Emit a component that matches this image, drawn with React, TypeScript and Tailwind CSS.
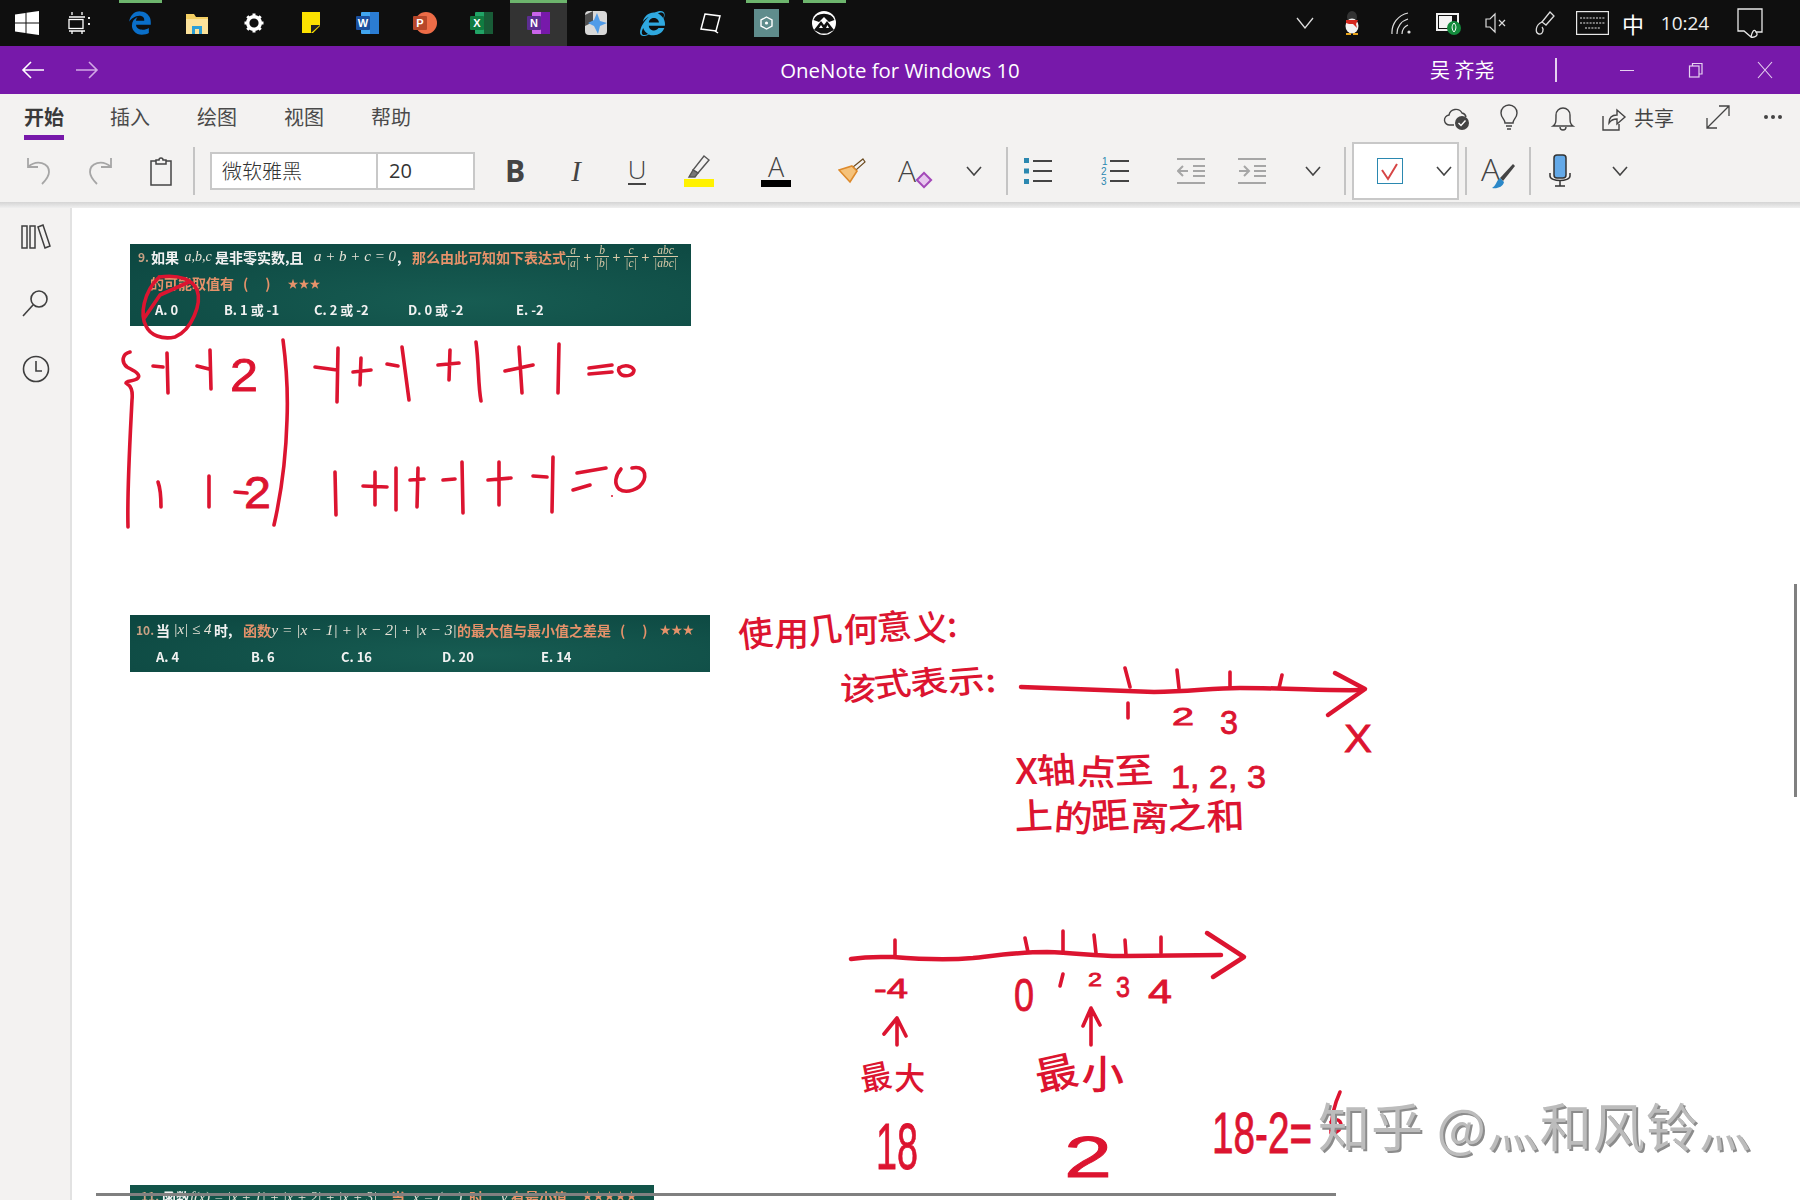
import { FaEdgeLegacy, FaInternetExplorer } from "react-icons/fa6";

const INK = "#dc1430";
const CJK = "'Noto Sans CJK SC', sans-serif";
const NUM = "'Liberation Sans', sans-serif";

const TaskSlot = ({ children, active, running }: { children: React.ReactNode; active?: boolean; running?: boolean }) => (
    <div className={`relative w-[57px] h-[46px] flex items-center justify-center ${active ? "bg-[#333333]" : ""}`}>
        {running && <div className={`absolute top-0 h-[3px] bg-[#6db56d] ${active ? "left-0 right-0" : "left-[8px] right-[6px]"}`} />}
        {children}
    </div>
);

const OfficeIcon = ({ letter, dark, mid, light, round }: { letter: string; dark: string; mid: string; light: string; round?: boolean }) => (
    <svg width="26" height="26" viewBox="0 0 26 26">
        {round ? (
            <circle cx="14" cy="13" r="11" fill={light} />
        ) : (
            <>
                <rect x="6" y="2" width="18" height="22" rx="1" fill={light} />
                <rect x="15" y="2" width="9" height="22" fill={mid} />
            </>
        )}
        <rect x="1" y="6" width="14" height="14" rx="1" fill={dark} />
        <text x="8" y="17" textAnchor="middle" fontSize="11" fontWeight="700" fill="white" fontFamily={NUM}>{letter}</text>
    </svg>
);

const Taskbar = () => (
    <div className="relative h-[46px] bg-[#0f0f0f] flex items-center shrink-0 text-white">
        <div className="w-[54px] flex justify-center">
            <svg width="26" height="26" viewBox="0 0 26 26" fill="white">
                <polygon points="1,4.5 11.5,3 11.5,12.5 1,12.5" />
                <polygon points="12.5,2.8 25,1 25,12.5 12.5,12.5" />
                <polygon points="1,13.5 11.5,13.5 11.5,23 1,21.5" />
                <polygon points="12.5,13.5 25,13.5 25,25 12.5,23.2" />
            </svg>
        </div>
        <div className="w-[52px] flex justify-center">
            <svg width="26" height="24" viewBox="0 0 26 24" fill="none" stroke="white" strokeWidth="1.3">
                <path d="M2 6H18M15 1V4M5 1V4" />
                <rect x="2" y="8.5" width="14" height="9" />
                <path d="M2 20H18M5 20V23M15 20V23" />
                <path d="M22 6V8M22 12V14" strokeWidth="1.8" />
            </svg>
        </div>
        <div className="ml-[5px] flex">
            <TaskSlot running><FaEdgeLegacy size={24} className="text-[#0a6fc9]" /></TaskSlot>
            <TaskSlot>
                <svg width="24" height="24" viewBox="0 0 24 24">
                    <path d="M1 3H9L11 6H23V22H1Z" fill="#f4cf63" />
                    <rect x="1" y="8" width="22" height="15" fill="#fbe29b" />
                    <path d="M7 23V15H17V23H14V18H10V23Z" fill="#2a9ed8" />
                </svg>
            </TaskSlot>
            <TaskSlot>
                <svg width="22" height="22" viewBox="0 0 22 22">
                    <circle cx="11" cy="11" r="6.3" fill="none" stroke="white" strokeWidth="3.4" />
                    <path d="M11 1.5V5M11 17V20.5M1.5 11H5M17 11H20.5M4.3 4.3L6.8 6.8M15.2 15.2L17.7 17.7M17.7 4.3L15.2 6.8M6.8 15.2L4.3 17.7" stroke="white" strokeWidth="3" />
                </svg>
            </TaskSlot>
            <TaskSlot>
                <svg width="20" height="22" viewBox="0 0 20 22">
                    <path d="M1 0H19V14L12 21H1Z" fill="#fce100" />
                    <path d="M10 21V13H19Z" fill="#222" />
                </svg>
            </TaskSlot>
            <TaskSlot><OfficeIcon letter="W" dark="#1a4f9e" mid="#2b7cd3" light="#41a5ee" /></TaskSlot>
            <TaskSlot><OfficeIcon letter="P" dark="#b7472a" mid="#d24726" light="#ed6c47" round /></TaskSlot>
            <TaskSlot><OfficeIcon letter="X" dark="#107c41" mid="#185c37" light="#21a366" /></TaskSlot>
            <TaskSlot active running><OfficeIcon letter="N" dark="#5c2d91" mid="#7719aa" light="#ca64ea" /></TaskSlot>
            <TaskSlot>
                <svg width="26" height="26" viewBox="0 0 26 26">
                    <rect x="2" y="1" width="22" height="24" rx="4" fill="#d8d8d8" />
                    <path d="M2 5L10 1V12L2 16Z" fill="#4d4d4d" />
                    <path d="M14 3L17 11L24 13L17 16L15 24L11 16L5 13L11 10Z" fill="#4f9be8" />
                </svg>
            </TaskSlot>
            <TaskSlot>
                <FaInternetExplorer size={25} className="text-[#2fa8df]" />
            </TaskSlot>
            <TaskSlot>
                <svg width="24" height="24" viewBox="0 0 24 24" fill="none" stroke="white" strokeWidth="1.5">
                    <path d="M7 3L22 5L18 20L3 18Z" />
                    <path d="M17 20L20 22" />
                </svg>
            </TaskSlot>
            <TaskSlot running>
                <svg width="25" height="28" viewBox="0 0 25 28">
                    <rect width="25" height="28" fill="#5f8c8c" />
                    <polygon points="12.5,8 18,11 18,17 12.5,20 7,17 7,11" fill="none" stroke="white" strokeWidth="1.4" />
                    <circle cx="12.5" cy="14" r="1.6" fill="white" />
                </svg>
            </TaskSlot>
            <TaskSlot running>
                <svg width="26" height="26" viewBox="0 0 26 26">
                    <circle cx="13" cy="13" r="12" fill="white" />
                    <path d="M2.5 10A11 9 0 0 1 23.5 10L18 12L13 7L8 12Z" fill="#111" />
                    <path d="M3 20L10 11L13 15L16 11L23 20L16 23.5H10Z" fill="#111" />
                    <path d="M8 18L10 15L12 18Z M15 18L16.5 15L18 18Z" fill="white" />
                </svg>
            </TaskSlot>
        </div>
        <div className="ml-auto flex items-center h-full pr-[20px]">
            <div className="w-[47px] flex justify-center">
                <svg width="18" height="12" viewBox="0 0 18 12" fill="none" stroke="#dddddd" strokeWidth="1.3"><path d="M1 1L9 11L17 1" /></svg>
            </div>
            <div className="w-[48px] flex justify-center">
                <svg width="18" height="24" viewBox="0 0 18 24">
                    <ellipse cx="9" cy="6" rx="5" ry="6" fill="#333" />
                    <ellipse cx="9" cy="15" rx="6.5" ry="7.5" fill="#f2f2f2" />
                    <path d="M3 9H15L13 13L14 17L10 13H6L3 12Z" fill="#d5281f" />
                    <path d="M3 22H8V24H3ZM10 22H15V24H10Z" fill="#e8a51c" />
                </svg>
            </div>
            <div className="w-[52px] flex justify-center">
                <svg width="22" height="24" viewBox="0 0 22 24" fill="none" stroke="#dddddd" strokeWidth="1.2">
                    <path d="M1 23A20 20 0 0 1 17 2M6 23A15 15 0 0 1 17 8M11 23A10 10 0 0 1 17 14" />
                    <circle cx="18" cy="21" r="1.6" fill="#dddddd" stroke="none" />
                </svg>
            </div>
            <div className="w-[42px] flex justify-center">
                <svg width="26" height="24" viewBox="0 0 26 24">
                    <rect x="1" y="3" width="21" height="16" fill="#111" stroke="#f0f0f0" strokeWidth="2" />
                    <rect x="3" y="5" width="13" height="12" fill="#f4f4f4" />
                    <circle cx="18" cy="17" r="7" fill="#138a3c" />
                    <path d="M18 12C21 15 20 19 18 21C16 19 15 15 18 12Z" fill="none" stroke="white" strokeWidth="1" />
                </svg>
            </div>
            <div className="w-[52px] flex justify-center">
                <svg width="24" height="22" viewBox="0 0 24 22" fill="none" stroke="#dddddd" strokeWidth="1.2">
                    <path d="M2 7H6L11 2V20L6 15H2Z" />
                    <path d="M15 8L21 14M21 8L15 14" />
                </svg>
            </div>
            <div className="w-[46px] flex justify-center">
                <svg width="24" height="26" viewBox="0 0 24 26" fill="none" stroke="#dddddd" strokeWidth="1.3">
                    <path d="M17 2L21 6L13 15L9 12Z" />
                    <path d="M9 12C2 15 2 23 6 24C10 25 11 19 9 17" />
                </svg>
            </div>
            <div className="w-[48px] flex justify-center">
                <svg width="33" height="24" viewBox="0 0 33 24" fill="none" stroke="#e8e8e8" strokeWidth="1.2">
                    <rect x="0.6" y="0.6" width="31.8" height="22.8" />
                    <path d="M4 7H29M4 12H29M9 17H24" strokeDasharray="2 1.2" />
                </svg>
            </div>
            <div className="w-[34px] text-center text-[22px] leading-none font-['Noto_Sans_CJK_SC',sans-serif] text-white">中</div>
            <div className="w-[70px] text-center text-[19px] text-[#eeeeee] font-['Open_Sans',sans-serif]">10:24</div>
            <div className="w-[60px] flex justify-center">
                <svg width="26" height="30" viewBox="0 0 26 30" fill="none" stroke="#e8e8e8" strokeWidth="1.3">
                    <path d="M1 1H25V24H19C17 20 15 24 14 29L7 23H1Z" />
                    <path d="M19 24C22 27 18 30 14 29" />
                </svg>
            </div>
        </div>
    </div>
);

const TitleBar = () => (
    <div className="relative h-[48px] bg-[#7719aa] shrink-0 flex items-center text-white">
        <div className="pl-[21px]">
            <svg width="24" height="20" viewBox="0 0 24 20" fill="none" stroke="white" strokeWidth="1.6"><path d="M23 10H2M10 2L2 10L10 18" /></svg>
        </div>
        <div className="pl-[30px]">
            <svg width="24" height="20" viewBox="0 0 24 20" fill="none" stroke="#d2a8e6" strokeWidth="1.6"><path d="M1 10H22M14 2L22 10L14 18" /></svg>
        </div>
        <div className="absolute inset-x-0 text-center text-[20.4px] font-['Open_Sans',sans-serif]">OneNote for Windows 10</div>
        <div className="ml-auto flex items-center">
            <div className="w-[68px] text-[20px] font-['Noto_Sans_CJK_SC',sans-serif] whitespace-nowrap">吴 齐尧</div>
            <div className="ml-[57px] w-[2px] h-[24px] bg-[#e6d2f0]" />
            <div className="ml-[63px] w-[14px] h-[1px] bg-[#e6d2f0]" />
            <svg className="ml-[54px]" width="16" height="16" viewBox="0 0 16 16" fill="none" stroke="#e6d2f0" strokeWidth="1.2">
                <rect x="1.5" y="4" width="9.5" height="11" />
                <path d="M4.5 4V1.5H14V12H11" />
            </svg>
            <svg className="ml-[52px] mr-[26px]" width="18" height="18" viewBox="0 0 18 18" fill="none" stroke="#e6d2f0" strokeWidth="1.1"><path d="M2 1L16 17M16 1L2 17" /></svg>
        </div>
    </div>
);

const TabsRow = () => (
    <div className="h-[46px] bg-[#f3f2f1] shrink-0 flex text-[20px] text-[#4a4a4a] font-['Noto_Sans_CJK_SC',sans-serif] leading-none">
        <div className="ml-[24px] w-[40px] h-full flex flex-col justify-between pt-[13px] font-bold text-[#3a3a3a]">
            <span>开始</span>
            <div className="h-[5px] bg-[#7719aa]" />
        </div>
        <span className="ml-[46px] pt-[13px]">插入</span>
        <span className="ml-[47px] pt-[13px]">绘图</span>
        <span className="ml-[47px] pt-[13px]">视图</span>
        <span className="ml-[47px] pt-[13px]">帮助</span>
        <div className="ml-auto flex items-start pt-[10px] pr-[18px] text-[#444444]">
            <svg width="28" height="28" viewBox="0 0 28 28" fill="none" stroke="#444444" strokeWidth="1.4">
                <path d="M11 21H7A5 5 0 0 1 6 11A7 7 0 0 1 19 9A5 5 0 0 1 23 13" />
                <circle cx="19" cy="19" r="7" fill="#444444" stroke="none" />
                <path d="M15.5 19L18 21.5L22.5 16.5" stroke="white" />
            </svg>
            <svg className="ml-[25px]" width="26" height="28" viewBox="0 0 26 28" fill="none" stroke="#444444" strokeWidth="1.4">
                <path d="M9 19C9 15 5 14 5 9A8 8 0 0 1 21 9C21 14 17 15 17 19Z" />
                <path d="M10 22H16M11 25H15" />
            </svg>
            <svg className="ml-[28px]" width="26" height="28" viewBox="0 0 26 28" fill="none" stroke="#444444" strokeWidth="1.4">
                <path d="M3 22C6 20 6 18 6 11A7 7 0 0 1 20 11C20 18 20 20 23 22Z" />
                <path d="M10 23C10 27 16 27 16 23" />
            </svg>
            <svg className="ml-[25px]" width="26" height="28" viewBox="0 0 26 28" fill="none" stroke="#444444" strokeWidth="1.4">
                <path d="M2 12V26H18V20" />
                <path d="M8 19C8 13 12 11 16 11V6L24 13L16 20V15C12 15 10 16 8 19Z" />
            </svg>
            <span className="ml-[7px] pt-[4px]">共享</span>
            <svg className="ml-[31px]" width="26" height="26" viewBox="0 0 26 26" fill="none" stroke="#444444" strokeWidth="1.3">
                <path d="M2 24L24 2M14 2H24V12M2 14V24H12" />
            </svg>
            <div className="ml-[33px] flex gap-[3px] pt-[11px]">
                <div className="w-[4px] h-[4px] rounded-full bg-[#444444]" />
                <div className="w-[4px] h-[4px] rounded-full bg-[#444444]" />
                <div className="w-[4px] h-[4px] rounded-full bg-[#444444]" />
            </div>
        </div>
    </div>
);

const Chevron = () => (
    <svg width="16" height="10" viewBox="0 0 16 10" fill="none" stroke="#444444" strokeWidth="1.6"><path d="M1 1L8 9L15 1" /></svg>
);

const Divider = () => <div className="w-[2px] h-[48px] bg-[#c4c4c4] shrink-0" />;

const ToolbarRow = () => (
    <div className="h-[62px] bg-[#f3f2f1] shrink-0 flex items-center pl-[9px] text-[#444444]">
        <div className="w-[60px] flex justify-center">
            <svg width="28" height="30" viewBox="0 0 28 30" fill="none" stroke="#a6a6a6" strokeWidth="1.8"><path d="M3 2V11H13M3 11C12 3 24 7 24 16C24 21 20 25 17 28" /></svg>
        </div>
        <div className="w-[62px] flex justify-center">
            <svg width="28" height="30" viewBox="0 0 28 30" fill="none" stroke="#a6a6a6" strokeWidth="1.8"><path d="M25 2V11H15M25 11C16 3 4 7 4 16C4 21 8 25 11 28" /></svg>
        </div>
        <div className="w-[60px] flex justify-center">
            <svg width="24" height="30" viewBox="0 0 24 30" fill="none" stroke="#444444" strokeWidth="1.5">
                <rect x="2" y="5" width="20" height="24" />
                <path d="M7 8V4H10A2 2 0 0 1 14 4H17V8Z" fill="#f3f2f1" />
            </svg>
        </div>
        <div className="ml-[2px]"><Divider /></div>
        <div className="ml-[15px] w-[265px] h-[38px] flex bg-white border-2 border-[#c8c8c8] text-[20px] text-[#333333]">
            <div className="w-[166px] pl-[10px] border-r-2 border-[#c8c8c8] flex items-center font-['Noto_Sans_CJK_SC',sans-serif] font-light">微软雅黑</div>
            <div className="pl-[11px] flex items-center font-['Open_Sans',sans-serif]">20</div>
        </div>
        <div className="w-[80px] text-center text-[30px] font-bold leading-none font-['Open_Sans',sans-serif]">B</div>
        <div className="w-[42px] text-center text-[29px] italic leading-none font-['Liberation_Serif',serif]">I</div>
        <div className="w-[80px] flex flex-col items-center leading-none">
            <span className="text-[26px] font-['Open_Sans',sans-serif] font-light leading-[24px]">U</span>
            <div className="w-[18px] h-[2px] bg-[#444444] mt-[2px]" />
        </div>
        <div className="w-[44px] flex flex-col items-center">
            <svg width="24" height="24" viewBox="0 0 24 24" fill="none" stroke="#555555" strokeWidth="1.4">
                <path d="M17 1L22 5L11 18L6 15Z" />
                <path d="M6 15L2 22H8L11 18Z" fill="#777777" />
            </svg>
            <div className="w-[30px] h-[8px] bg-[#fff200]" />
        </div>
        <div className="w-[110px] flex flex-col items-center leading-none">
            <span className="text-[27px] font-['Open_Sans',sans-serif] font-light leading-[24px]">A</span>
            <div className="w-[30px] h-[7px] bg-black mt-[1px]" />
        </div>
        <div className="w-[42px] flex justify-center">
            <svg width="28" height="28" viewBox="0 0 28 28" stroke="#6b4a1e" strokeWidth="1.2">
                <path d="M25 2L27 5L18 13L15 10Z" fill="#f3f2f1" />
                <path d="M14 9L19 14L12 25L1 13Z" fill="#f5c27a" stroke="#dd8a2c" strokeWidth="1.6" />
            </svg>
        </div>
        <div className="w-[80px] flex justify-center">
            <div className="relative w-[30px] h-[30px]">
                <span className="text-[30px] leading-none font-['Open_Sans',sans-serif] font-light">A</span>
                <div className="absolute right-[-2px] bottom-[0px] w-[12px] h-[12px] rotate-45 border-2 border-[#a349b8] bg-[#e7c8ee]" />
            </div>
        </div>
        <div className="w-[42px] flex justify-center"><Chevron /></div>
        <div className="ml-[11px]"><Divider /></div>
        <div className="w-[60px] flex justify-center">
            <svg width="30" height="28" viewBox="0 0 30 28" stroke="#444444" strokeWidth="2">
                <path d="M10 4H29M10 14H29M10 24H29" />
                <rect x="1" y="1" width="5" height="5" fill="#2b88b0" stroke="none" />
                <rect x="1" y="11.5" width="5" height="5" fill="#2b88b0" stroke="none" />
                <rect x="1" y="22" width="5" height="5" fill="#2b88b0" stroke="none" />
            </svg>
        </div>
        <div className="w-[92px] flex justify-center">
            <svg width="30" height="30" viewBox="0 0 30 30" stroke="#444444" strokeWidth="2">
                <path d="M11 5H30M11 15H30M11 25H30" />
                <text x="3" y="9" fontSize="10" fill="#2b88b0" stroke="none" fontFamily={NUM}>1</text>
                <text x="2" y="19" fontSize="10" fill="#2b88b0" stroke="none" fontFamily={NUM}>2</text>
                <text x="2" y="29" fontSize="10" fill="#2b88b0" stroke="none" fontFamily={NUM}>3</text>
            </svg>
        </div>
        <div className="w-[62px] flex justify-center">
            <svg width="28" height="28" viewBox="0 0 28 28" fill="none" stroke="#a6a6a6" strokeWidth="2">
                <path d="M0 2H28M16 9H28M16 14H28M16 19H28M0 26H28M11 14H1M6 9L1 14L6 19" />
            </svg>
        </div>
        <div className="w-[60px] flex justify-center">
            <svg width="28" height="28" viewBox="0 0 28 28" fill="none" stroke="#a6a6a6" strokeWidth="2">
                <path d="M0 2H28M16 9H28M16 14H28M16 19H28M0 26H28M1 14H11M6 9L11 14L6 19" />
            </svg>
        </div>
        <div className="w-[62px] flex justify-center"><Chevron /></div>
        <Divider />
        <div className="ml-[6px] w-[107px] h-[58px] bg-white border-2 border-[#c8c8c8] flex items-center justify-between pl-[23px] pr-[5px]">
            <svg width="26" height="26" viewBox="0 0 26 26" fill="none">
                <rect x="0.5" y="0.5" width="25" height="25" stroke="#2b88b0" />
                <path d="M5 12L11 21L20 6" stroke="#d64545" strokeWidth="2" />
            </svg>
            <Chevron />
        </div>
        <div className="ml-[6px]"><Divider /></div>
        <div className="w-[62px] flex justify-center">
            <div className="relative w-[34px] h-[36px]">
                <span className="text-[32px] leading-none font-['Open_Sans',sans-serif] font-light">A</span>
                <svg className="absolute right-0 bottom-0" width="24" height="26" viewBox="0 0 24 26">
                    <path d="M22 1L24 3L12 18L9 15Z" fill="#444444" />
                    <path d="M9 15L13 19C12 24 6 26 1 25C5 23 5 18 9 15Z" fill="#2b88c8" />
                </svg>
            </div>
        </div>
        <Divider />
        <div className="w-[58px] flex justify-center">
            <svg width="22" height="34" viewBox="0 0 22 34" fill="none" stroke="#333333" strokeWidth="1.5">
                <rect x="5" y="1" width="12" height="23" rx="3" fill="#63a9e8" />
                <path d="M1 19V22C1 28 21 28 21 22V19M11 27V32M6 32H16" />
            </svg>
        </div>
        <div className="w-[62px] flex justify-center"><Chevron /></div>
    </div>
);

const Sidebar = () => (
    <div className="w-[72px] shrink-0 bg-[#f3f2f1] border-r-2 border-[#e2e2e2] flex flex-col items-center pt-[15px] gap-[38px] pl-[2px]">
        <svg width="30" height="28" viewBox="0 0 30 28" fill="none" stroke="#3f3f3f" strokeWidth="1.5">
            <rect x="1" y="3" width="5" height="22" />
            <rect x="9" y="3" width="5" height="22" />
            <path d="M17 4L22 2L29 23L24 25Z" />
        </svg>
        <svg width="28" height="28" viewBox="0 0 28 28" fill="none" stroke="#3f3f3f" strokeWidth="1.6">
            <circle cx="17" cy="10" r="8" />
            <path d="M11 16L1 27" />
        </svg>
        <svg width="28" height="28" viewBox="0 0 28 28" fill="none" stroke="#3f3f3f" strokeWidth="1.6">
            <circle cx="14" cy="14" r="12.5" />
            <path d="M14 6V16H20" />
        </svg>
    </div>
);

const Frac = ({ top, bottom, wide }: { top: string; bottom: string; wide?: boolean }) => (
    <span className={`inline-flex flex-col items-center shrink-0 text-[11.5px] leading-[12px] italic font-['Liberation_Serif',serif] text-[#d9c9a8] font-normal ${wide ? "w-[25px]" : "w-[14px]"}`}>
        <span className="border-b border-[#d9c9a8] w-full text-center">{top}</span>
        <span>{bottom}</span>
    </span>
);

const Plus = () => <span className="w-[15px] shrink-0 text-center text-[#d9c9a8] font-normal">+</span>;

const Math = ({ children, className }: { children: React.ReactNode; className: string }) => (
    <span className={`shrink-0 text-center font-['Liberation_Serif',serif] italic font-normal text-[#e8e4d8] whitespace-pre ${className}`}>{children}</span>
);

const NoteOne = () => (
    <div className="absolute left-[130px] top-[244px] w-[561px] h-[82px] bg-[radial-gradient(ellipse_at_60%_70%,#175c52,#0c4640)] text-white font-bold font-['Noto_Sans_CJK_SC',sans-serif] flex flex-col text-[14px] leading-none blur-[0.3px]">
        <div className="flex items-center h-[25px] pl-[8px] whitespace-nowrap">
            <span className="text-[12px] text-[#c9a184] w-[13px] shrink-0">9.</span>
            <span className="text-[#f2f2f2] w-[30px] shrink-0">如果</span>
            <Math className="w-[34px] text-[14px]">a,b,c</Math>
            <span className="text-[#f2f2f2] w-[98px] shrink-0">是非零实数,且</span>
            <Math className="w-[84px] text-[15px]">a + b + c = 0</Math>
            <span className="text-[#f2f2f2] w-[15px] shrink-0">,</span>
            <span className="text-[#e6926a] w-[154px] shrink-0">那么由此可知如下表达式</span>
            <Frac top="a" bottom="|a|" />
            <Plus />
            <Frac top="b" bottom="|b|" />
            <Plus />
            <Frac top="c" bottom="|c|" />
            <Plus />
            <Frac top="abc" bottom="|abc|" wide />
        </div>
        <div className="flex items-center h-[28px] pl-[20px] text-[#e6926a] whitespace-pre">
            <span>的可能取值有</span>
            <span className="ml-[9px]">(</span>
            <span className="ml-[17px]">)</span>
            <span className="ml-[17px] text-[11px]">★★★</span>
        </div>
        <div className="flex items-center h-[25px] text-[13px] text-[#f2f2f2]">
            <span className="ml-[25px] w-[69px]">A. 0</span>
            <span className="w-[90px]">B. 1 或 -1</span>
            <span className="w-[94px]">C. 2 或 -2</span>
            <span className="w-[108px]">D. 0 或 -2</span>
            <span>E. -2</span>
        </div>
    </div>
);

const NoteTwo = () => (
    <div className="absolute left-[130px] top-[615px] w-[580px] h-[57px] bg-[radial-gradient(ellipse_at_60%_70%,#175c52,#0c4640)] font-bold font-['Noto_Sans_CJK_SC',sans-serif] flex flex-col text-[14px] leading-none blur-[0.3px]">
        <div className="flex items-center h-[29px] pl-[6px] whitespace-pre">
            <span className="text-[12px] text-[#c9a184] w-[20px] shrink-0">10.</span>
            <span className="text-[#f2f2f2] w-[15px] shrink-0">当</span>
            <Math className="w-[43px] text-[15px]">|x| ≤ 4</Math>
            <span className="text-[#f2f2f2] w-[29px] shrink-0">时,</span>
            <span className="text-[#e6926a] w-[28px] shrink-0">函数</span>
            <Math className="w-[186px] text-[15.5px]">y = |x − 1| + |x − 2| + |x − 3|</Math>
            <span className="text-[#e6926a] w-[163px] shrink-0">的最大值与最小值之差是</span>
            <span className="text-[#e6926a]">(</span>
            <span className="ml-[17px] text-[#e6926a]">)</span>
            <span className="ml-[12px] text-[#e6926a] text-[11.5px]">★★★</span>
        </div>
        <div className="flex items-center h-[24px] text-[13px] text-[#f2f2f2]">
            <span className="ml-[26px] w-[95px]">A. 4</span>
            <span className="w-[90px]">B. 6</span>
            <span className="w-[101px]">C. 16</span>
            <span className="w-[99px]">D. 20</span>
            <span>E. 14</span>
        </div>
    </div>
);

const NoteThree = () => (
    <div className="absolute left-[130px] top-[1185px] w-[524px] h-[15px] overflow-hidden bg-[#125449] font-bold font-['Noto_Sans_CJK_SC',sans-serif] text-[14px] leading-none pt-[5px] pl-[11px] whitespace-pre flex items-start blur-[0.3px]">
        <span className="text-[12px] text-[#c9a184] w-[21px] shrink-0">11.</span>
        <span className="text-[#f2f2f2] w-[28px] shrink-0">函数</span>
        <Math className="w-[186px] text-[14.5px]">f(x) = |x + 1| + |x + 2| + |x + 3|</Math>
        <span className="text-[#e6926a] w-[15px] shrink-0">,</span>
        <span className="text-[#e6926a] w-[15px] shrink-0">当</span>
        <Math className="w-[63px] text-[15px]">x = (    )</Math>
        <span className="text-[#e6926a] w-[28px] shrink-0">时,</span>
        <Math className="w-[14px] text-[15px]">y</Math>
        <span className="text-[#e6926a] w-[71px] shrink-0">有最小值</span>
        <span className="text-[#e6926a] text-[11px]">★★★★★</span>
    </div>
);

const strokes = [
    // first problem: the circled answer
    "M159 277C180 274 193 280 197 290C202 303 192 330 175 337C162 340 150 335 146 326C140 315 143 293 159 277",
    "M145 317L160 295L189 282",
    // brace and the long bar
    "M130 352C122 354 121 362 127 367C134 371 141 374 138 378C134 382 126 380 126 383C131 386 133 390 132 400C130 440 127 490 128 527",
    "M283 340C287 370 288 395 287 420C286 455 282 490 274 525",
    // row one
    "M153 366L163 367M167 353L168 393M197 366L209 369M210 350L211 389",
    "M315 367L337 370M338 348L337 402M353 372L371 370M361 358L360 385M387 364L398 366M402 347L409 400",
    "M438 365L459 363M450 350L449 380M476 342C479 365 478 385 481 401M505 371L533 365M519 347L522 393M559 344L558 393",
    "M589 368L612 365M589 374L612 372",
    "M619 368C625 364 632 366 634 370C634 375 627 377 622 375C619 373 618 370 619 368",
    // row two
    "M158 482C161 490 161 498 161 507M209 476L209 507",
    "M235 492L247 493M335 472L336 515M363 486L387 487M375 472L375 505M396 468L396 510M410 480L424 479M418 468L417 507",
    "M443 480L455 479M462 462L463 513M488 480L511 478M499 462L499 505M533 476L547 477M553 457L552 512",
    "M577 473L606 468M573 490L590 485",
    "M621 469C615 476 614 484 619 489C626 494 640 490 644 480C647 470 640 466 632 468",
    // first number line
    "M1021 687C1050 688 1100 690 1154 692C1190 692 1210 688 1240 688C1290 688 1330 691 1362 690",
    "M1335 673L1365 689L1328 715",
    "M1125 668L1130 687M1177 670L1179 688M1230 672L1230 688M1282 675L1279 688M1128 703L1128 718",
    // second number line
    "M851 959C870 956 880 957 893 957C930 960 950 960 973 958C1000 955 1020 952 1047 952C1080 953 1100 957 1126 956L1221 955",
    "M1207 933L1244 957L1213 977",
    "M895 940L895 957M1025 938L1028 952M1063 931L1063 952M1094 935L1096 953M1125 940L1126 955M1161 937L1161 953",
    "M1063 974L1060 986",
    // arrows up to the labels
    "M897 1018L897 1045M884 1034L897 1018L906 1036",
    "M1091 1008L1091 1045M1083 1026L1091 1008L1100 1025",
    // the tall 1 of the result
    "M1340 1092C1334 1105 1331 1118 1331 1133",
    "M1331 1122C1340 1116 1343 1124 1339 1130C1335 1134 1331 1133 1331 1128",
];

const heavy = [14, 15, 17, 18];

const InkLayer = () => (
    <svg className="absolute left-0 top-0" width="1800" height="1200" viewBox="0 0 1800 1200" fill="none">
        {strokes.map((d, i) => (
            <path key={i} d={d} stroke={INK} strokeWidth={heavy.includes(i) ? 4.5 : 3.6} strokeLinecap="round" strokeLinejoin="round" />
        ))}
        <circle cx="612" cy="496" r="1" fill={INK} />
        {/* per glyph rotate keeps the handwriting from sitting on a ruler */}
        <g fill={INK} fontFamily={CJK} fontWeight="500">
            <text x="740" y="648" fontSize="34" textLength="218" lengthAdjust="spacingAndGlyphs" rotate="-4 3 -5 2 -3 6 0" transform="rotate(-3 740 648)">使用几何意义:</text>
            <text x="839" y="700" fontSize="32" textLength="158" lengthAdjust="spacingAndGlyphs" rotate="5 -4 -6 -2 0" transform="rotate(-3 839 700)">该式表示:</text>
            <text x="1015" y="784" fontSize="35" textLength="139" lengthAdjust="spacingAndGlyphs" rotate="0 -4 3 -3">X轴点至</text>
            <text x="1015" y="830" fontSize="36" textLength="230" lengthAdjust="spacingAndGlyphs" rotate="-3 4 -4 2 -5 -2">上的距离之和</text>
            <text x="863" y="1092" fontSize="32" textLength="62" lengthAdjust="spacingAndGlyphs" rotate="-8 5" transform="rotate(-4 863 1092)">最大</text>
            <text x="1039" y="1092" fontSize="40" textLength="85" lengthAdjust="spacingAndGlyphs" rotate="-9 4" transform="rotate(-4 1039 1092)">最小</text>
        </g>
        <g fill={INK} stroke={INK} strokeWidth="0.8" fontFamily={NUM}>
            <text x="230" y="391" fontSize="46" textLength="28" lengthAdjust="spacingAndGlyphs">2</text>
            <text x="244" y="508" fontSize="44" textLength="27" lengthAdjust="spacingAndGlyphs">2</text>
            <text x="1171" y="788" fontSize="32" textLength="95" lengthAdjust="spacingAndGlyphs">1, 2, 3</text>
            <text x="1172" y="725" fontSize="23" textLength="22" lengthAdjust="spacingAndGlyphs">2</text>
            <text x="1220" y="734" fontSize="34" textLength="18" lengthAdjust="spacingAndGlyphs">3</text>
            <text x="1344" y="752" fontSize="38" textLength="28" lengthAdjust="spacingAndGlyphs">X</text>
            <text x="874" y="998" fontSize="27" textLength="34" lengthAdjust="spacingAndGlyphs">-4</text>
            <text x="1014" y="1011" fontSize="46" textLength="20" lengthAdjust="spacingAndGlyphs">0</text>
            <text x="1088" y="986" fontSize="19" textLength="14" lengthAdjust="spacingAndGlyphs">2</text>
            <text x="1116" y="997" fontSize="30" textLength="14" lengthAdjust="spacingAndGlyphs">3</text>
            <text x="1148" y="1003" fontSize="34" textLength="24" lengthAdjust="spacingAndGlyphs">4</text>
            <text x="876" y="1169" fontSize="64" textLength="42" lengthAdjust="spacingAndGlyphs">18</text>
            <text x="1064" y="1177" fontSize="58" textLength="48" lengthAdjust="spacingAndGlyphs">2</text>
            <text x="1212" y="1153" fontSize="58" textLength="100" lengthAdjust="spacingAndGlyphs">18-2=</text>
        </g>
    </svg>
);

const Page = () => (
    <div className="relative flex-1 bg-white">
        <div className="absolute left-[-72px] top-[-208px] w-[1800px] h-[1200px]">
            <NoteOne />
            <NoteTwo />
            <NoteThree />
            <InkLayer />
            {/* horizontal scrollbar lying over the third note */}
            <div className="absolute left-[96px] top-[1193px] w-[1240px] h-[3px] bg-[#808080]" />
            {/* vertical scrollbar */}
            <div className="absolute left-[1794px] top-[584px] w-[3px] h-[213px] bg-[#808080]" />
            <div className="absolute left-[1318px] top-[1091px] whitespace-nowrap text-[52px] tracking-[1px] leading-[68px] text-[#bcbcbc] [text-shadow:2px_2px_0_#8c8c8c] font-['Noto_Sans_CJK_SC',sans-serif]">知乎 @灬和风铃灬</div>
        </div>
    </div>
);

export default function App() {
    return (
        <div className="w-[1800px] h-[1200px] overflow-hidden flex flex-col bg-white font-['Noto_Sans','Noto_Sans_CJK_SC',sans-serif]">
            <Taskbar />
            <TitleBar />
            <TabsRow />
            <ToolbarRow />
            <div className="h-[6px] shrink-0 bg-gradient-to-b from-[#d4d4d4] to-[#efefef]" />
            <div className="flex flex-1 min-h-0">
                <Sidebar />
                <Page />
            </div>
        </div>
    );
}
